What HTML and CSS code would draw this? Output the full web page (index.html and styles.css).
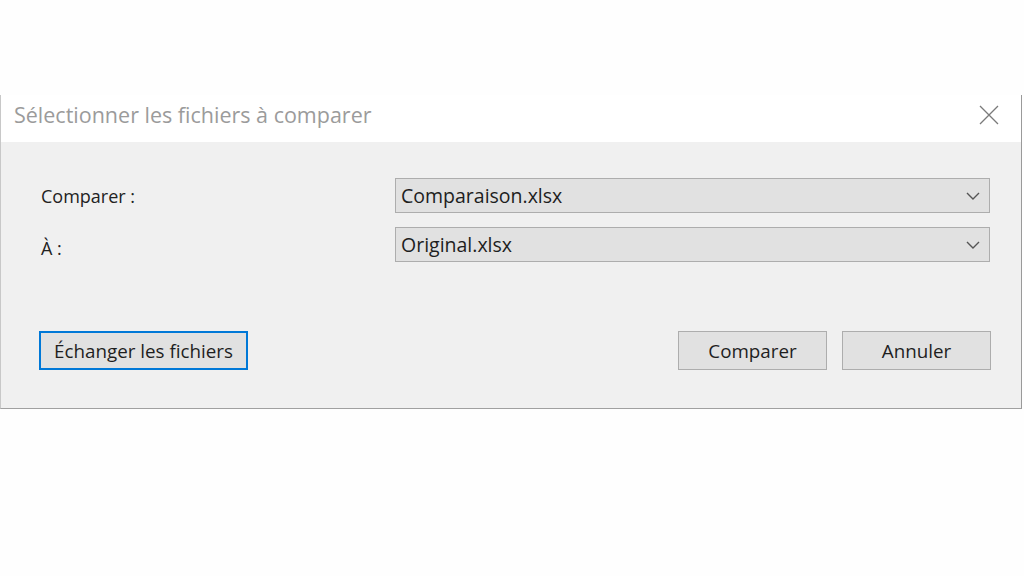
FILE: index.html
```html
<!DOCTYPE html>
<html lang="fr">
<head>
  <meta charset="UTF-8" />
  <meta name="viewport" content="width=device-width, initial-scale=1.0" />
  <title>Sélectionner les fichiers à comparer</title>
  <link rel="stylesheet" href="styles.css">
</head>
<body>
  <div class="dialog">
    <div class="title-bar">
      <span class="title">Sélectionner les fichiers à comparer</span>
      <div class="close-btn">
        <svg viewBox="0 0 20 20" width="20" height="20">
          <path d="M1 1 L19 19 M19 1 L1 19" stroke="#7a7a7a" stroke-width="1.3" fill="none" />
        </svg>
      </div>
    </div>

    <div class="dialog-body">
      <div class="fields">
        <label class="field-label">Comparer :</label>
        <div class="combo">
          <span>Comparaison.xlsx</span>
          <svg class="chevron" viewBox="0 0 14 8" width="14" height="8">
            <path d="M1 1 L7 7 L13 1" stroke="#555" stroke-width="1.4" fill="none" />
          </svg>
        </div>

        <label class="field-label label-low">À :</label>
        <div class="combo">
          <span>Original.xlsx</span>
          <svg class="chevron" viewBox="0 0 14 8" width="14" height="8">
            <path d="M1 1 L7 7 L13 1" stroke="#555" stroke-width="1.4" fill="none" />
          </svg>
        </div>
      </div>

      <div class="actions">
        <button class="btn btn-swap">Échanger les fichiers</button>
        <div class="actions-right">
          <button class="btn">Comparer</button>
          <button class="btn">Annuler</button>
        </div>
      </div>
    </div>
  </div>
</body>
</html>
```

FILE: styles.css
```css
/* Reset & Base */
* {
  margin: 0;
  padding: 0;
  box-sizing: border-box;
  font-family: 'Open Sans', 'Noto Sans', sans-serif;
}

body {
  background: #fefefe;
  width: 1024px;
  height: 576px;
  padding-top: 95px;
  overflow: hidden;
}

/* Dialog */
.dialog {
  width: 1022px;
  border-left: 1px solid #c8c8c8;
  border-right: 1px solid #9a9a9a;
  border-bottom: 1px solid #a0a0a0;
}

/* Title bar */
.title-bar {
  height: 47px;
  background: #fff;
  display: flex;
  align-items: center;
  justify-content: space-between;
  padding: 0 22px 8px 13px;
}

.title {
  color: #9b9b9b;
  font-size: 21.5px;
}

.close-btn {
  display: flex;
  align-items: center;
}

/* Body */
.dialog-body {
  height: 266px;
  background: #f0f0f0;
  padding: 36px 31px 0 38px;
}

.fields {
  display: grid;
  grid-template-columns: 356px 595px;
  row-gap: 14px;
  align-items: center;
}

.field-label {
  font-size: 18px;
  color: #222;
  padding-left: 2px;
}

.label-low {
  margin-top: 6px;
}

.combo {
  height: 35px;
  background: #e1e1e1;
  border: 1px solid #adadad;
  display: flex;
  align-items: center;
  justify-content: space-between;
  padding: 0 9px 0 5px;
  font-size: 19.5px;
  color: #1e1e1e;
}

/* Buttons */
.actions {
  margin-top: 69px;
  display: flex;
  justify-content: space-between;
  width: 952px;
}

.actions-right {
  display: flex;
  gap: 15px;
}

.btn {
  height: 39px;
  width: 149px;
  background: #e1e1e1;
  border: 1px solid #adadad;
  font-size: 18.8px;
  color: #1e1e1e;
}

.btn-swap {
  width: 209px;
  border: 2px solid #0078d7;
}
```
